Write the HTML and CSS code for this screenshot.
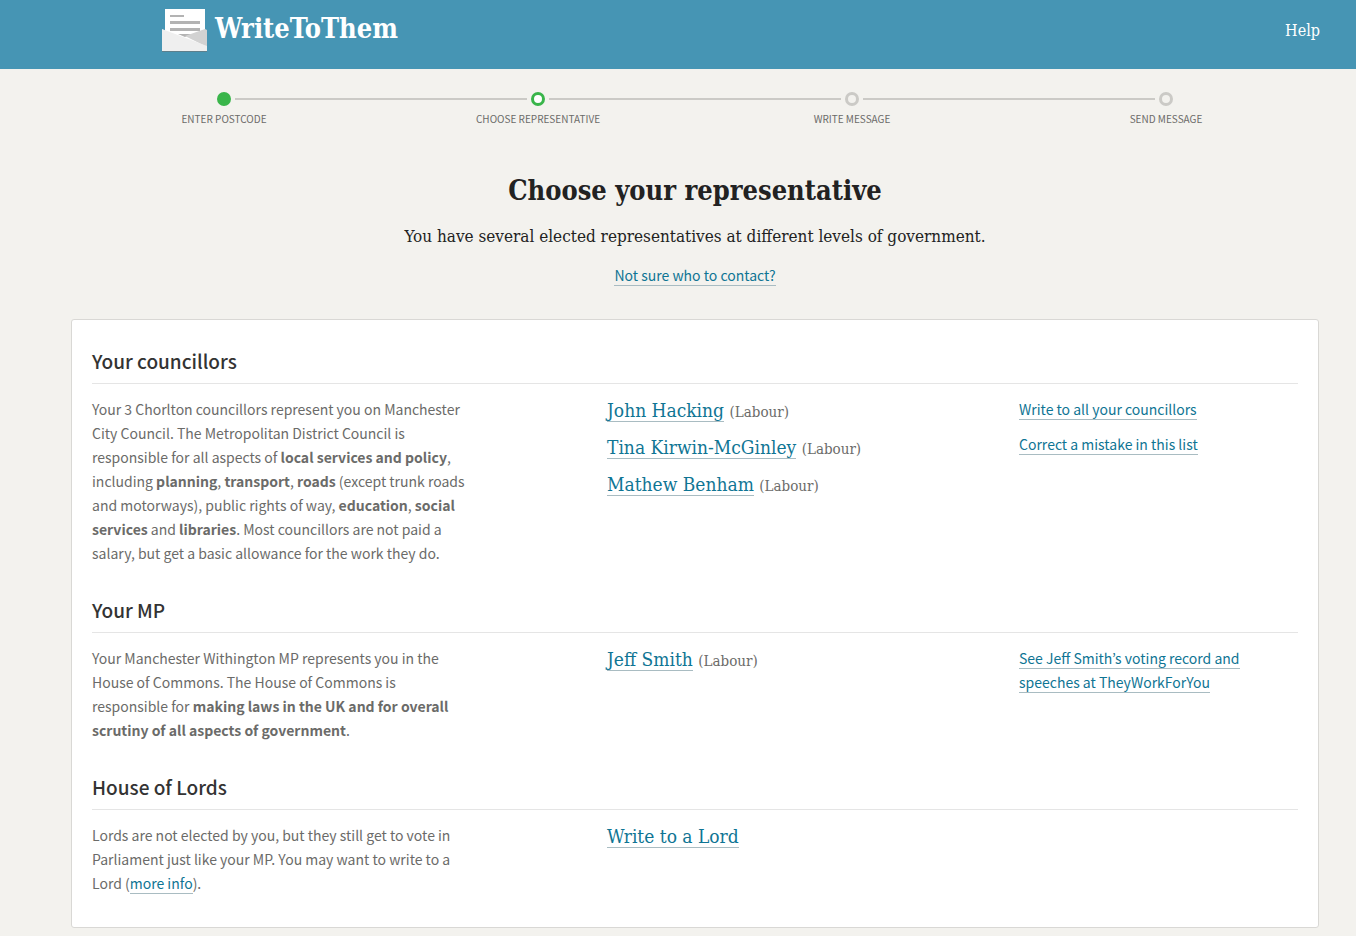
FILE: index.html
```html
<!DOCTYPE html>
<html lang="en">
<head>
<meta charset="utf-8">
<title>Choose your representative - WriteToThem</title>
<link rel="stylesheet" href="styles.css">
</head>
<body>
<header class="site-header">
  <a class="logo" href="#">
    <svg class="logo-icon" viewBox="0 0 45 43" aria-hidden="true">
      <path fill="#5d7f8c" d="M0 41h45v2H0z"/>
      <path fill="#fff" d="M3 0h40v36H3z"/>
      <path fill="#b3b3b3" d="M8 6h14v2H8zM8 12h30v3H8zM8 19h30v3H8zM16 25h14l-7 3z"/>
      <path fill="#d2d2d2" d="M23 27 43 20l2 1v17z"/>
      <path fill="#efefef" d="M0 20 45 37v5H0z"/>
    </svg>
    <span>WriteToThem</span>
  </a>
  <nav><a class="help" href="#">Help</a></nav>
</header>
<main class="page">
  <ol class="steps">
    <li class="step done"><span class="track"><i class="dot"></i></span>Enter postcode</li>
    <li class="step current"><span class="track"><i class="dot"></i></span>Choose representative</li>
    <li class="step"><span class="track"><i class="dot"></i></span>Write message</li>
    <li class="step"><span class="track"><i class="dot"></i></span>Send message</li>
  </ol>
  <div class="intro">
    <h1>Choose your representative</h1>
    <p class="lead">You have several elected representatives at different levels of government.</p>
    <p><a href="#">Not sure who to contact?</a></p>
  </div>
  <div class="card">
    <section class="group">
      <h2>Your councillors</h2>
      <div class="columns">
        <p class="about">Your 3 Chorlton councillors represent you on Manchester City Council. The Metropolitan District Council is responsible for all aspects of <strong>local services and policy</strong>, including <strong>planning</strong>, <strong>transport</strong>, <strong>roads</strong> (except trunk roads and motorways), public rights of way, <strong>education</strong>, <strong>social services</strong> and <strong>libraries</strong>. Most councillors are not paid a salary, but get a basic allowance for the work they do.</p>
        <ul class="people">
          <li><a href="#">John Hacking</a> <small>(Labour)</small></li>
          <li><a href="#">Tina Kirwin-McGinley</a> <small>(Labour)</small></li>
          <li><a href="#">Mathew Benham</a> <small>(Labour)</small></li>
        </ul>
        <ul class="actions">
          <li><a href="#">Write to all your councillors</a></li>
          <li><a href="#">Correct a mistake in this list</a></li>
        </ul>
      </div>
    </section>
    <section class="group">
      <h2>Your MP</h2>
      <div class="columns">
        <p class="about">Your Manchester Withington MP represents you in the House of Commons. The House of Commons is responsible for <strong>making laws in the UK and for overall scrutiny of all aspects of government</strong>.</p>
        <ul class="people">
          <li><a href="#">Jeff Smith</a> <small>(Labour)</small></li>
        </ul>
        <ul class="actions">
          <li><a href="#">See Jeff Smith’s voting record and speeches at TheyWorkForYou</a></li>
        </ul>
      </div>
    </section>
    <section class="group">
      <h2>House of Lords</h2>
      <div class="columns">
        <p class="about">Lords are not elected by you, but they still get to vote in Parliament just like your MP. You may want to write to a Lord (<a href="#">more info</a>).</p>
        <ul class="people">
          <li><a href="#">Write to a Lord</a></li>
        </ul>
      </div>
    </section>
  </div>
</main>
</body>
</html>
```
FILE: styles.css
```css
:root {
  --sans: "Noto Sans CJK KR", "Open Sans", sans-serif;
  --serif: "DejaVu Serif Condensed", "DejaVu Serif", serif;
  --blue: #4695b4;
  --link: #0f7594;
}
* { box-sizing: border-box; }
body {
  margin: 0;
  background: #f3f2ee;
  color: #6b6b69;
  font: 14px/24px var(--sans);
}
h1, h2, p, ul, ol { margin: 0; padding: 0; }
ul, ol { list-style: none; }
a {
  color: var(--link);
  text-decoration: none;
  border-bottom: 1px solid #a9bcc2;
}
.site-header {
  display: flex;
  justify-content: space-between;
  height: 69px;
  padding: 9px 36px 0 162px;
  background: var(--blue);
  font-family: var(--serif);
}
.site-header a { color: #fff; border: 0; }
.logo {
  display: flex;
  gap: 8px;
  font-size: 27px;
  line-height: 40px;
  font-weight: bold;
}
.logo-icon { width: 45px; height: 43px; }
.help { font-size: 16px; line-height: 44px; }
.page { padding: 0 37px 8px 71px; }
.steps {
  display: grid;
  grid-template-columns: repeat(4, 1fr);
  margin: 0 -4px;
  padding-top: 23px;
}
.step {
  font-size: 10px;
  line-height: 26px;
  text-align: center;
  text-transform: uppercase;
}
.track { display: flex; align-items: center; gap: 4px; height: 14px; }
.track::before, .track::after {
  content: "";
  flex: 1;
  height: 2px;
  background: #cbcac6;
}
.step:first-child .track::before,
.step:last-child .track::after { background: none; }
.dot {
  width: 14px;
  height: 14px;
  border: 3px solid #cbcac6;
  border-radius: 50%;
}
.done .dot { border-color: #39b54a; background: #39b54a; }
.current .dot { border-color: #39b54a; background: #fff; }
.intro { padding: 39px 0 32px; text-align: center; color: #222; }
.intro h1 { font: bold 27px/40px var(--serif); }
.lead { margin: 13px 0 15px; font: 17px/24px var(--serif); }
.card {
  padding: 29px 20px 32px;
  border: 1px solid #d9d8d5;
  border-radius: 3px;
  background: #fff;
}
.group + .group { margin-top: 33px; }
.group h2 {
  margin-bottom: 13px;
  padding-bottom: 10px;
  border-bottom: 1px solid #e5e5e5;
  color: #333;
  font-size: 19px;
  line-height: 24px;
  font-weight: 500;
}
.columns {
  display: grid;
  grid-template-columns: repeat(12, 1fr);
  column-gap: 30px;
}
.about { grid-column: 1 / span 4; }
.people { grid-column: 6 / span 4; font: 19px/26px var(--serif); }
.people li + li, .actions li + li { margin-top: 11px; }
.people small { font-size: 15px; line-height: 16px; }
.actions { grid-column: 10 / span 3; }
```
